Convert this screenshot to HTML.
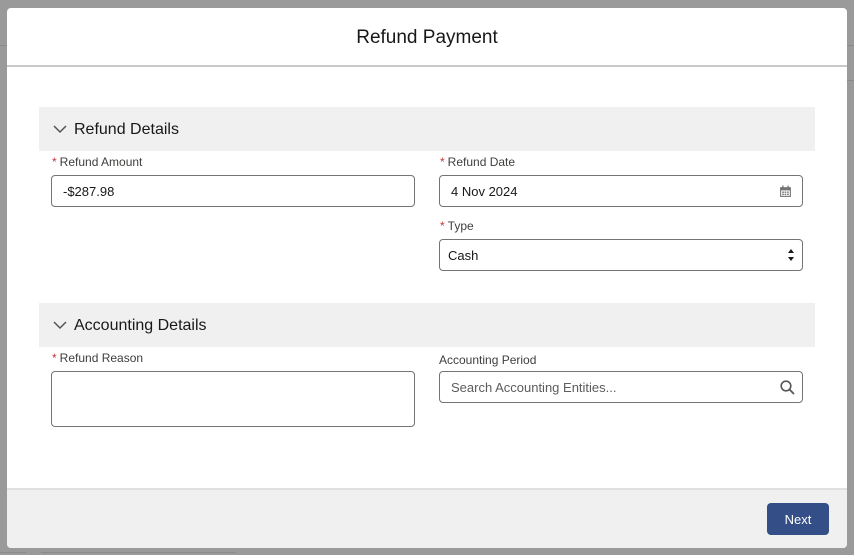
<!DOCTYPE html>
<html><head><style>
body{margin:0;width:854px;height:555px;background:#9a9a9a;font-family:"Liberation Sans",sans-serif;position:relative;overflow:hidden;color:#181818}
.bgl{position:absolute;background:#8a8a8a;height:1px}
.modal{position:absolute;left:7px;top:8px;width:840px;height:540px;background:#fff;border-radius:4px;overflow:hidden}
.hdr{height:57px;border-bottom:2px solid #c9c9c9;text-align:center;line-height:60px;font-size:19px}
.sec{position:absolute;left:32px;width:776px;height:44px;background:#f0f0f0;font-size:16px;line-height:46px}
.sec svg{position:absolute;left:14px;top:17px}
.sec span{position:absolute;left:35px}
.lbl{position:absolute;font-size:12px;color:#3e3e3c}
.lbl b{color:#c23934;font-weight:normal;margin-right:3px}
.inp{position:absolute;height:30px;border:1px solid #747474;border-radius:4px;box-sizing:content-box;font-size:13px;line-height:32px;padding-left:11px;width:351px}
.ftr{position:absolute;left:0;top:480px;width:840px;height:60px;background:#f0f0f0;border-top:2px solid #e0e0e0}
.btn{position:absolute;left:760px;top:13px;width:62px;height:32px;background:#344f87;color:#fff;border-radius:4px;text-align:center;line-height:33px;font-size:13px}
</style></head><body>
<div class="bgl" style="left:0;top:45px;width:7px"></div>
<div class="bgl" style="left:847px;top:45px;width:7px"></div>
<div class="bgl" style="left:847px;top:80px;width:7px"></div>
<div class="bgl" style="left:0;top:552px;width:26px"></div>
<div class="bgl" style="left:41px;top:552px;width:195px"></div>
<div class="modal">
<div class="hdr">Refund Payment</div>
<div class="sec" style="top:99px"><svg width="14" height="10" viewBox="0 0 14 10"><path d="M1 2l6 6 6-6" fill="none" stroke="#555" stroke-width="1.5"/></svg><span>Refund Details</span></div>
<div class="lbl" style="left:45px;top:147px"><b>*</b>Refund Amount</div>
<div class="inp" style="left:44px;top:167px">-$287.98</div>
<div class="lbl" style="left:433px;top:147px"><b>*</b>Refund Date</div>
<div class="inp" style="left:432px;top:167px">4 Nov 2024<svg style="position:absolute;right:10px;top:9px" width="13" height="13" viewBox="0 0 12 12"><rect x="3" y="0.5" width="1.2" height="2" fill="#747474"/><rect x="7.8" y="0.5" width="1.2" height="2" fill="#747474"/><rect x="1" y="2" width="10" height="9" fill="#747474"/><rect x="2" y="5" width="8" height="5" fill="#fff"/><rect x="3" y="6" width="1.5" height="1.3" fill="#747474"/><rect x="5.2" y="6" width="1.5" height="1.3" fill="#747474"/><rect x="7.5" y="6" width="1.5" height="1.3" fill="#747474"/><rect x="3" y="8" width="1.5" height="1.3" fill="#747474"/><rect x="5.2" y="8" width="1.5" height="1.3" fill="#747474"/><rect x="7.5" y="8" width="1.5" height="1.3" fill="#747474"/></svg></div>
<div class="lbl" style="left:433px;top:211px"><b>*</b>Type</div>
<div class="inp" style="left:432px;top:231px;padding-left:8px;width:354px">Cash<svg style="position:absolute;right:7px;top:8px" width="8" height="14" viewBox="0 0 8 14"><path d="M4 1L7 5H1z M4 13L7 9H1z" fill="#181818"/></svg></div>
<div class="sec" style="top:295px"><svg width="14" height="10" viewBox="0 0 14 10"><path d="M1 2l6 6 6-6" fill="none" stroke="#555" stroke-width="1.5"/></svg><span>Accounting Details</span></div>
<div class="lbl" style="left:45px;top:343px"><b>*</b>Refund Reason</div>
<div class="inp" style="left:44px;top:363px;height:54px"></div>
<div class="lbl" style="left:432px;top:345px">Accounting Period</div>
<div class="inp" style="left:432px;top:363px;color:#5c5c5c">Search Accounting Entities...<svg style="position:absolute;right:7px;top:8px" width="15" height="15" viewBox="0 0 15 15"><circle cx="6" cy="6" r="4.8" fill="none" stroke="#555" stroke-width="1.6"/><path d="M9.5 9.5L14 14" stroke="#555" stroke-width="1.8"/></svg></div>
<div class="ftr"><div class="btn">Next</div></div>
</div>
</body></html>
